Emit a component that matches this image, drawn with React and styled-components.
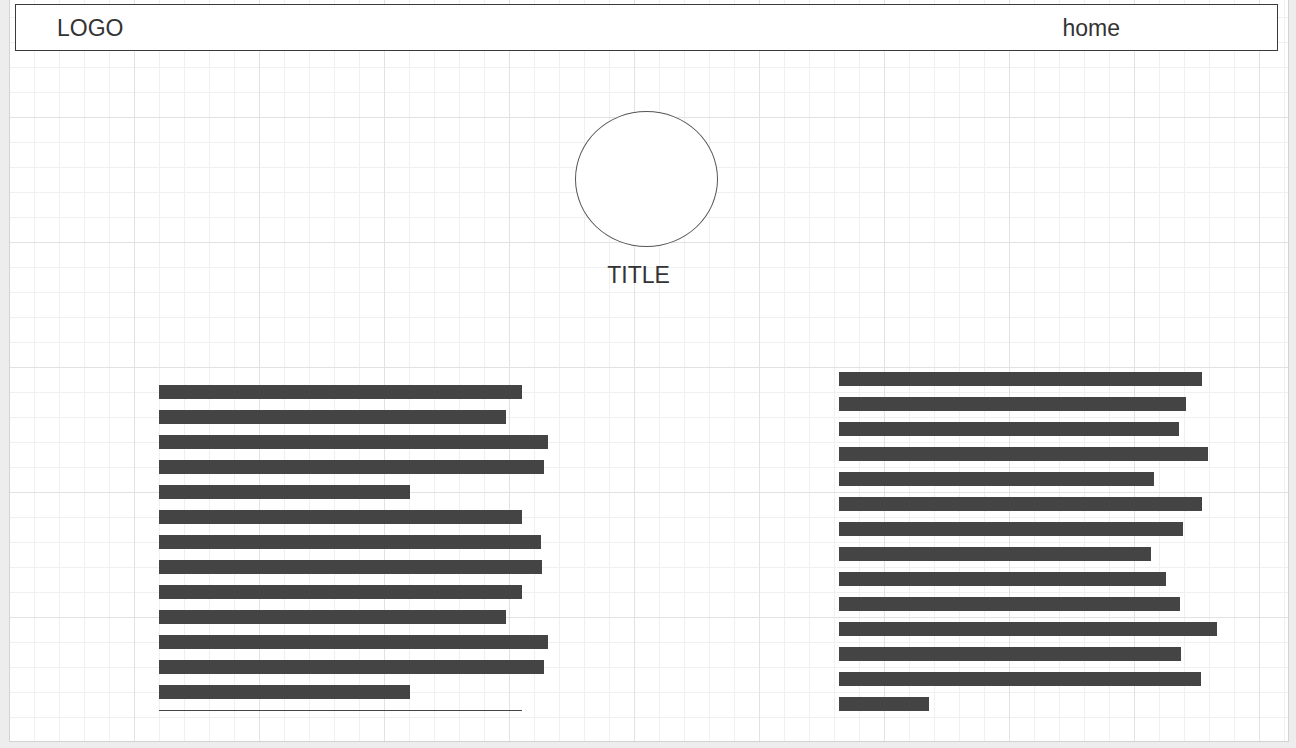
import React from 'react';
import styled, { createGlobalStyle } from 'styled-components';

const GlobalStyle = createGlobalStyle`
  html, body {
    margin: 0;
    padding: 0;
    background: #ededed;
  }
  body {
    font-family: "Liberation Sans", Arial, sans-serif;
    color: #333333;
  }
`;

const Canvas = styled.div`
  box-sizing: border-box;
  margin-left: 9px;
  width: 1280px;
  height: 742px;
  display: flex;
  flex-direction: column;
  background-color: #ffffff;
  background-image:
    linear-gradient(to right, #e2e2e2 1px, transparent 1px),
    linear-gradient(to bottom, #e2e2e2 1px, transparent 1px),
    linear-gradient(to right, #f0f0f0 1px, transparent 1px),
    linear-gradient(to bottom, #f0f0f0 1px, transparent 1px);
  background-size: 125px 100%, 100% 125px, 25px 100%, 100% 25px;
  background-position: 0 -8px;
  background-origin: border-box;
  border-left: 1px solid #d3d3d3;
  border-right: 1px solid #d3d3d3;
  border-bottom: 1px solid #d3d3d3;
  overflow: hidden;
`;

const Header = styled.header`
  box-sizing: border-box;
  margin: 4px 10px 0 5px;
  height: 47px;
  display: flex;
  align-items: center;
  justify-content: space-between;
  padding: 0 157px 0 41px;
  background: #ffffff;
  border: 1px solid #3a3a3a;
`;

const NavText = styled.span`
  font-size: 23px;
  line-height: 26px;
  color: #333333;
`;

const Hero = styled.section`
  display: flex;
  flex-direction: column;
  align-items: center;
  margin-top: 60px;
`;

const Avatar = styled.div`
  box-sizing: border-box;
  width: 143px;
  height: 136px;
  margin-right: 5px;
  border: 1px solid #555555;
  border-radius: 50%;
  background: #ffffff;
`;

const Title = styled.h1`
  margin: 15px 21px 0 0;
  font-size: 23px;
  line-height: 26px;
  font-weight: normal;
  color: #333333;
`;

const Columns = styled.section`
  display: grid;
  grid-template-columns: 680px 1fr;
  align-items: start;
  margin-top: 84px;
  padding-left: 149px;
`;

const TextBlock = styled.div`
  display: flex;
  flex-direction: column;
  gap: 11px;
  padding-top: ${(p) => p.$offset || 0}px;
`;

const Bar = styled.div`
  height: 14px;
  background: #444444;
`;

const Rule = styled.div`
  height: 1px;
  background: #444444;
`;

const leftBars = [363, 347, 389, 385, 251, 363, 382, 383, 363, 347, 389, 385, 251];
const rightBars = [363, 347, 340, 369, 315, 363, 344, 312, 327, 341, 378, 342, 362, 90];

export default function App() {
  return (
    <>
      <GlobalStyle />
      <Canvas>
        <Header>
          <NavText>LOGO</NavText>
          <NavText>home</NavText>
        </Header>
        <Hero>
          <Avatar />
          <Title>TITLE</Title>
        </Hero>
        <Columns>
          <TextBlock $offset={13}>
            {leftBars.map((w, i) => (
              <Bar key={i} style={{ width: w }} />
            ))}
            <Rule style={{ width: 363 }} />
          </TextBlock>
          <TextBlock>
            {rightBars.map((w, i) => (
              <Bar key={i} style={{ width: w }} />
            ))}
          </TextBlock>
        </Columns>
      </Canvas>
    </>
  );
}
